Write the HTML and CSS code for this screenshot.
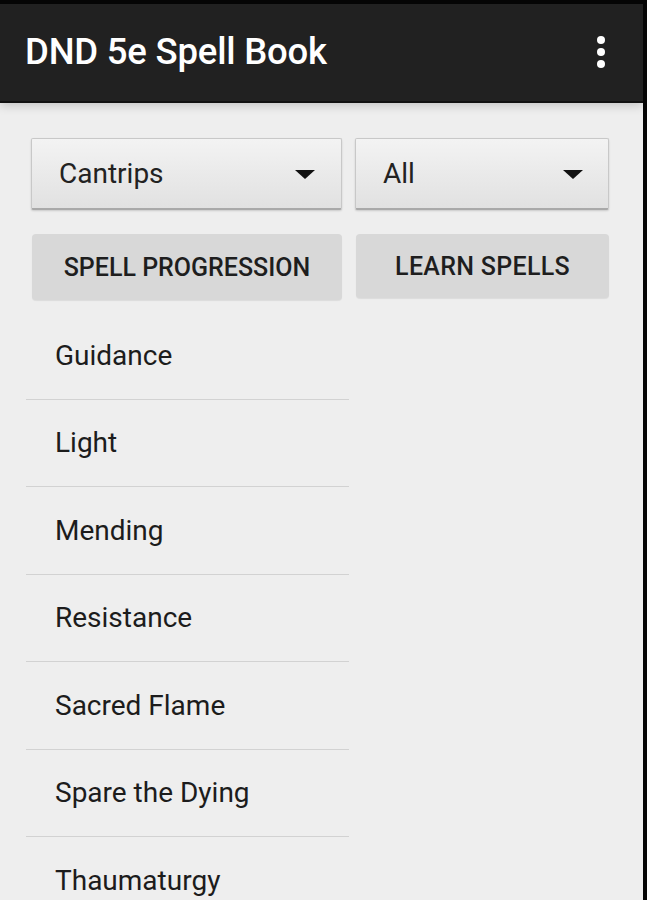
FILE: index.html
```html
<!DOCTYPE html>
<html>
<head>
<meta charset="utf-8">
<link rel="stylesheet" href="styles.css">
</head>
<body>
<div class="screen">
  <header class="toolbar">
    <h1 class="title">DND 5e Spell Book</h1>
    <div class="overflow"><span></span><span></span><span></span></div>
  </header>
  <main class="content">
    <div class="controls">
      <div class="spinner"><span>Cantrips</span><i class="arrow"></i></div>
      <div class="spinner"><span>All</span><i class="arrow"></i></div>
      <button class="btn">SPELL PROGRESSION</button>
      <button class="btn btn-short">LEARN SPELLS</button>
    </div>
    <ul class="spells">
      <li>Guidance</li>
      <li>Light</li>
      <li>Mending</li>
      <li>Resistance</li>
      <li>Sacred Flame</li>
      <li>Spare the Dying</li>
      <li>Thaumaturgy</li>
    </ul>
  </main>
</div>
</body>
</html>
```
FILE: styles.css
```css
html, body {
  margin: 0;
  padding: 0;
  background: #000;
}
.screen {
  width: 647px;
  height: 900px;
  box-sizing: border-box;
  border-top: 4px solid #050505;
  border-right: 4px solid #050505;
  background: #eeeeee;
  overflow: hidden;
  font-family: Roboto, "Liberation Sans", sans-serif;
  display: flex;
  flex-direction: column;
}
.toolbar {
  flex-shrink: 0;
  height: 99px;
  box-sizing: border-box;
  background: #212121;
  border-bottom: 2px solid #111;
  display: flex;
  align-items: center;
  padding: 0 0 0 25px;
  position: relative;
  z-index: 1;
  box-shadow: 0 2px 10px rgba(0,0,0,0.2);
}
.title {
  margin: 0 0 2px 0;
  color: #fff;
  font-size: 36.5px;
  font-weight: 500;
  letter-spacing: -0.2px;
  flex: 1;
}
.overflow {
  width: 8px;
  display: flex;
  flex-direction: column;
  gap: 4px;
  margin-right: 38px;
  margin-top: -1px;
}
.overflow span {
  width: 8px;
  height: 8px;
  border-radius: 50%;
  background: #fff;
}
.content {
  flex-shrink: 0;
  padding: 35px 0 0 26px;
}
.controls {
  display: grid;
  grid-template-columns: 311px 254px;
  column-gap: 13px;
  row-gap: 24px;
  padding-left: 5px;
}
.spinner {
  height: 72px;
  box-sizing: border-box;
  background: linear-gradient(#f3f3f3, #e1e1e1);
  border: 1px solid #c8c8c8;
  border-bottom: 2px solid #a9a9a9;
  border-radius: 2px;
  box-shadow: 0 1px 2px rgba(0,0,0,0.15);
  display: flex;
  align-items: center;
  justify-content: space-between;
  padding: 0 26px 0 27px;
  font-size: 28px;
  color: #222;
}
.spinner:nth-child(2) { padding-left: 27px; padding-right: 25px; }
.arrow {
  width: 0;
  height: 0;
  border-left: 10px solid transparent;
  border-right: 10px solid transparent;
  border-top: 9px solid #111;
  margin-top: 2px;
}
.btn {
  height: 66px;
  margin-left: 1px;
  width: 310px;
  border: none;
  border-radius: 4px;
  background: #d8d8d8;
  box-shadow: 0 1px 1px rgba(0,0,0,0.08);
  font-family: Roboto, "Liberation Sans", sans-serif;
  font-size: 25px;
  font-weight: 500;
  color: #1e1e1e;
  letter-spacing: 0;
  padding: 0;
}
.btn-short {
  height: 64px;
  width: 253px;
  letter-spacing: 0.3px;
}
.spells {
  list-style: none;
  margin: 12px 0 0 0;
  padding: 0;
  width: 323px;
}
.spells li {
  height: 87.5px;
  box-sizing: border-box;
  border-bottom: 1px solid #d2d2d2;
  display: flex;
  align-items: center;
  padding-left: 29px;
  font-size: 28px;
  color: #1c1c1c;
}
```
